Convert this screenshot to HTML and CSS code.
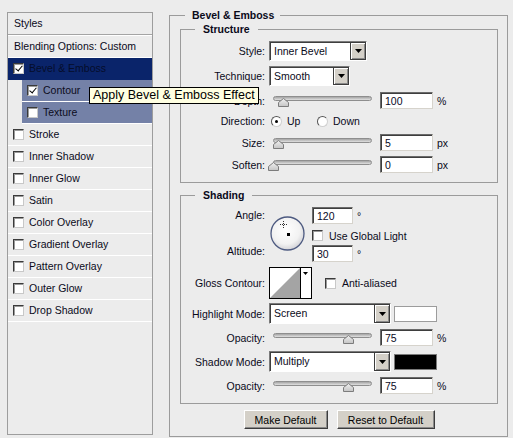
FILE: index.html
```html
<!DOCTYPE html>
<html>
<head>
<meta charset="utf-8">
<link rel="stylesheet" href="styles.css">
</head>
<body>
<div class="dialog">
  <aside class="styles-panel">
    <div class="panel-head">Styles</div>
    <div class="row blend">Blending Options: Custom</div>
    <div class="row sel"><span class="cb checked"></span>Bevel &amp; Emboss</div>
    <div class="row sub"><span class="cb checked"></span>Contour</div>
    <div class="row sub"><span class="cb"></span>Texture</div>
    <div class="row"><span class="cb"></span>Stroke</div>
    <div class="row"><span class="cb"></span>Inner Shadow</div>
    <div class="row"><span class="cb"></span>Inner Glow</div>
    <div class="row"><span class="cb"></span>Satin</div>
    <div class="row"><span class="cb"></span>Color Overlay</div>
    <div class="row"><span class="cb"></span>Gradient Overlay</div>
    <div class="row"><span class="cb"></span>Pattern Overlay</div>
    <div class="row"><span class="cb"></span>Outer Glow</div>
    <div class="row"><span class="cb"></span>Drop Shadow</div>
  </aside>

  <main class="settings">
    <fieldset class="group outer">
      <legend>Bevel &amp; Emboss</legend>

      <fieldset class="group inner structure">
        <legend>Structure</legend>

        <div class="field h20 first">
          <span class="lbl">Style:</span>
          <div class="select w98"><span class="val">Inner Bevel</span><span class="drop"><svg width="7" height="4" viewBox="0 0 7 4"><polygon points="0,0 7,0 3.5,4" fill="#000"/></svg></span></div>
        </div>

        <div class="field h20 m5">
          <span class="lbl">Technique:</span>
          <div class="select w81"><span class="val">Smooth</span><span class="drop"><svg width="7" height="4" viewBox="0 0 7 4"><polygon points="0,0 7,0 3.5,4" fill="#000"/></svg></span></div>
        </div>

        <div class="field h17 m6">
          <span class="lbl">Depth:</span>
          <div class="slider"><div class="track"></div><svg class="thumb" style="left:9px" width="11" height="9" viewBox="0 0 11 9"><defs><linearGradient id="tg1" x1="0" y1="0" x2="0" y2="1"><stop offset="0" stop-color="#f0f0f0"/><stop offset="1" stop-color="#c4c4c4"/></linearGradient></defs><polygon points="0.5,8.5 0.5,4.5 5.5,0.5 10.5,4.5 10.5,8.5" fill="url(#tg1)" stroke="#7c7c7c"/></svg></div>
          <span class="num w53">100</span><span class="unit">%</span>
        </div>

        <div class="field h16 m4">
          <span class="lbl">Direction:</span>
          <span class="opt up"><span class="radio on"></span><span class="otext">Up</span></span>
          <span class="opt"><span class="radio"></span><span class="otext">Down</span></span>
        </div>

        <div class="field h17 m5">
          <span class="lbl">Size:</span>
          <div class="slider"><div class="track"></div><svg class="thumb" style="left:4px" width="11" height="9" viewBox="0 0 11 9"><polygon points="0.5,8.5 0.5,4.5 5.5,0.5 10.5,4.5 10.5,8.5" fill="url(#tg1)" stroke="#7c7c7c"/></svg></div>
          <span class="num w53">5</span><span class="unit">px</span>
        </div>

        <div class="field h17 m5">
          <span class="lbl">Soften:</span>
          <div class="slider"><div class="track"></div><svg class="thumb" style="left:-1px" width="11" height="9" viewBox="0 0 11 9"><polygon points="0.5,8.5 0.5,4.5 5.5,0.5 10.5,4.5 10.5,8.5" fill="url(#tg1)" stroke="#7c7c7c"/></svg></div>
          <span class="num w53">0</span><span class="unit">px</span>
        </div>
      </fieldset>

      <fieldset class="group inner shading">
        <legend>Shading</legend>

        <div class="angle-block">
          <div class="angle-labels"><span>Angle:</span><span>Altitude:</span></div>
          <svg class="dial" width="35" height="35" viewBox="0 0 35 35">
            <defs><radialGradient id="dg" cx="0.45" cy="0.4" r="0.6"><stop offset="0" stop-color="#ffffff"/><stop offset="0.7" stop-color="#f2f2f2"/><stop offset="1" stop-color="#d4d4d8"/></radialGradient></defs>
            <circle cx="17.5" cy="17.5" r="16.5" fill="url(#dg)" stroke="#4d5a80" stroke-width="1.3"/>
            <path d="M13.5 5v7M10 8.5h7" stroke="#333" stroke-width="1" stroke-dasharray="1 1"/>
            <rect x="17" y="17" width="3" height="3" fill="#000"/>
          </svg>
          <div class="angle-inputs">
            <div class="irow"><span class="num w41">120</span><span class="deg">°</span></div>
            <div class="crow"><span class="cb"></span><span>Use Global Light</span></div>
            <div class="irow m4"><span class="num w41">30</span><span class="deg">°</span></div>
          </div>
        </div>

        <div class="field h32 m5">
          <span class="lbl">Gloss Contour:</span>
          <svg class="contour" width="43" height="32" viewBox="0 0 43 32">
            <rect x="0.5" y="0.5" width="42" height="31" fill="#fff" stroke="#000"/>
            <polygon points="1,31 31,1 31,31" fill="#a4a4a4"/>
            <line x1="31.5" y1="0" x2="31.5" y2="32" stroke="#000"/>
            <polygon points="34,5 39,5 36.5,8" fill="#000"/>
          </svg>
          <span class="cb aa"></span><span class="cbtext">Anti-aliased</span>
        </div>

        <div class="field h21 m4">
          <span class="lbl">Highlight Mode:</span>
          <div class="select w122 tall"><span class="val">Screen</span><span class="drop"><svg width="7" height="4" viewBox="0 0 7 4"><polygon points="0,0 7,0 3.5,4" fill="#000"/></svg></span></div>
          <span class="swatch white"></span>
        </div>

        <div class="field h17 m5">
          <span class="lbl">Opacity:</span>
          <div class="slider"><div class="track"></div><svg class="thumb" style="left:74px" width="11" height="9" viewBox="0 0 11 9"><polygon points="0.5,8.5 0.5,4.5 5.5,0.5 10.5,4.5 10.5,8.5" fill="url(#tg1)" stroke="#7c7c7c"/></svg></div>
          <span class="num w53">75</span><span class="unit">%</span>
        </div>

        <div class="field h21 m5">
          <span class="lbl">Shadow Mode:</span>
          <div class="select w122 tall"><span class="val">Multiply</span><span class="drop"><svg width="7" height="4" viewBox="0 0 7 4"><polygon points="0,0 7,0 3.5,4" fill="#000"/></svg></span></div>
          <span class="swatch black"></span>
        </div>

        <div class="field h17 m5">
          <span class="lbl">Opacity:</span>
          <div class="slider"><div class="track"></div><svg class="thumb" style="left:74px" width="11" height="9" viewBox="0 0 11 9"><polygon points="0.5,8.5 0.5,4.5 5.5,0.5 10.5,4.5 10.5,8.5" fill="url(#tg1)" stroke="#7c7c7c"/></svg></div>
          <span class="num w53">75</span><span class="unit">%</span>
        </div>
      </fieldset>

      <div class="buttons">
        <button class="btn make">Make Default</button>
        <button class="btn reset">Reset to Default</button>
      </div>
    </fieldset>
  </main>

  <div class="tooltip">Apply Bevel &amp; Emboss Effect</div>
</div>
</body>
</html>
```

FILE: styles.css
```css
* { box-sizing: border-box; }
html, body { margin: 0; padding: 0; }
body {
  background: #ececec;
  font: 10.5px "Liberation Sans", Arial, sans-serif;
  color: #0a0a1a;
  width: 513px;
  height: 438px;
  overflow: hidden;
}
.dialog {
  position: relative;
  display: flex;
  align-items: flex-start;
  height: 438px;
}

/* ---------- left styles list ---------- */
.styles-panel {
  margin: 12px 0 0 7px;
  width: 146px;
  height: 423px;
  border: 1px solid #9d9d9d;
  flex-shrink: 0;
}
.panel-head {
  height: 22px;
  line-height: 21px;
  padding-left: 6px;
  border-bottom: 1px solid #a4a4a4;
  box-shadow: 0 1px 0 #fff;
  margin-bottom: 1px;
}
.row {
  height: 22px;
  display: flex;
  align-items: center;
  padding: 0 0 1px 5px;
  border-bottom: 1px solid #fff;
  white-space: nowrap;
}
.row.blend { padding-left: 6px; }
.row.sel {
  background: #0a246a;
  border-bottom-color: #0a246a;
  color: #050d2a;
}
.row.sub {
  margin-left: 14px;
  background: #7481a7;
  color: #0c0c20;
}
.cb {
  position: relative;
  width: 11px;
  height: 11px;
  flex-shrink: 0;
  background: #fff;
  border: 1px solid;
  border-color: #3a3a3a #c8c8c8 #c8c8c8 #3a3a3a;
  box-shadow: inset 1px 1px 0 #9a9a9a;
  margin-right: 5px;
}
.cb.checked::after {
  content: "";
  position: absolute;
  left: 3px;
  top: 0px;
  width: 3px;
  height: 6px;
  border: solid #000;
  border-width: 0 1.5px 1.5px 0;
  transform: rotate(40deg);
}

/* ---------- right settings ---------- */
.settings {
  margin-left: 16px;
  flex-shrink: 0;
}
.group {
  margin: 0;
  min-width: 0;
  border: 1px solid #9b9b9b;
}
.group > legend {
  font-weight: bold;
  font-size: 10.5px;
  line-height: 14px;
  color: #0a0a1a;
}
.outer {
  margin-top: 8px;
  width: 339px;
  padding: 0 9px 7px 10px;
}
.outer > legend {
  margin-left: 5px;
  padding: 0 6px 0 7px;
}
.inner {
  width: 318px;
  padding: 0 0 9px 0;
}
.inner > legend {
  margin-left: 14px;
  padding: 0 8px;
}
.shading { margin-top: 5px; }

.field {
  display: flex;
  align-items: center;
  white-space: nowrap;
}
.field.first { margin-top: 5px; }
.h16 { height: 16px; }
.h17 { height: 17px; }
.h20 { height: 20px; }
.h21 { height: 21px; }
.h32 { height: 32px; }
.m4 { margin-top: 4px; }
.m5 { margin-top: 5px; }
.m6 { margin-top: 6px; }
.lbl {
  width: 84px;
  margin-right: 4px;
  text-align: right;
  flex-shrink: 0;
}

/* select */
.select {
  display: flex;
  height: 20px;
  background: #fff;
  border: 1px solid;
  border-color: #7a7a7a #fff #fff #7a7a7a;
  box-shadow: inset 1px 1px 0 #3e3e3e;
  flex-shrink: 0;
}
.select.tall { height: 21px; }
.w98 { width: 98px; }
.w81 { width: 81px; }
.w122 { width: 122px; }
.select .val {
  flex: 1;
  padding: 1px 0 0 4px;
  line-height: 17px;
  color: #0a0a20;
}
.select .drop {
  width: 16px;
  height: 100%;
  display: flex;
  align-items: center;
  justify-content: center;
  background: #d4d0c8;
  border: 1px solid #3c3c3c;
  box-shadow: inset 1px 1px 0 #fff, inset -1px -1px 0 #8a8a8a;
}

/* slider */
.slider {
  position: relative;
  width: 104px;
  height: 17px;
  margin-right: 7px;
  flex-shrink: 0;
}
.track {
  margin: 4px 0 0 4px;
  width: 99px;
  height: 5px;
  border-radius: 3px;
  border: 1px solid #8e8e8e;
  background: linear-gradient(#a4a4a4, #cfcfcf 70%, #e0e0e0);
}
.thumb {
  position: absolute;
  top: 6px;
  display: block;
}

/* numeric fields */
.num {
  height: 17px;
  background: #fff;
  border: 1px solid;
  border-color: #6a6a6a #d6d3cc #d6d3cc #6a6a6a;
  box-shadow: inset 1px 1px 0 #3e3e3e;
  padding: 1px 0 0 4px;
  line-height: 14px;
  color: #0a0a26;
  flex-shrink: 0;
}
.w53 { width: 53px; }
.w41 { width: 41px; }
.unit { margin-left: 4px; }
.deg { margin-left: 4px; }

/* radios */
.opt {
  display: flex;
  align-items: center;
}
.opt.up { width: 46px; margin-left: 2px; }
.radio {
  position: relative;
  width: 11px;
  height: 11px;
  border-radius: 50%;
  background: #fff;
  border: 1px solid;
  border-color: #555 #d0d0d0 #d0d0d0 #555;
  flex-shrink: 0;
}
.radio.on::after {
  content: "";
  position: absolute;
  left: 3px;
  top: 3px;
  width: 3px;
  height: 3px;
  background: #000;
  border-radius: 50%;
}
.otext { margin-left: 5px; }

/* angle block */
.angle-block {
  display: flex;
  margin-top: 5px;
  height: 55px;
}
.angle-labels {
  width: 84px;
  margin-right: 5px;
  display: flex;
  flex-direction: column;
  justify-content: space-between;
  text-align: right;
  line-height: 17px;
  padding-bottom: 2px;
}
.dial {
  display: block;
  margin-top: 9px;
  margin-right: 7px;
}
.angle-inputs {
  display: flex;
  flex-direction: column;
}
.irow {
  display: flex;
  align-items: center;
  height: 17px;
}
.crow {
  display: flex;
  align-items: center;
  margin-top: 6px;
  height: 11px;
  white-space: nowrap;
}
.crow .cb { margin-right: 6px; }

.contour { display: block; flex-shrink: 0; }
.cb.aa { margin-left: 13px; margin-right: 6px; }

.swatch {
  width: 43px;
  height: 16px;
  margin-left: 3px;
  border: 1px solid #9c9c9c;
}
.swatch.white { background: #fff; }
.swatch.black { background: #000; border-color: #7a7a7a; }

/* buttons */
.buttons {
  display: flex;
  justify-content: center;
  gap: 9px;
  margin-top: 6px;
}
.btn {
  height: 19px;
  padding: 0;
  font: 10.5px "Liberation Sans", Arial, sans-serif;
  color: #000;
  background: #d4d0c8;
  border: 1px solid;
  border-color: #fff #3c3c3c #3c3c3c #fff;
  box-shadow: inset -1px -1px 0 #8a8a8a;
}
.btn.make { width: 84px; }
.btn.reset { width: 98px; }

/* tooltip */
.tooltip {
  position: absolute;
  left: 89px;
  top: 87px;
  height: 17px;
  padding: 0 3px;
  border: 1px solid #000;
  background: #ffffe1;
  font: 12.5px "Liberation Sans", Arial, sans-serif;
  line-height: 15px;
  color: #000;
  white-space: nowrap;
}
```
